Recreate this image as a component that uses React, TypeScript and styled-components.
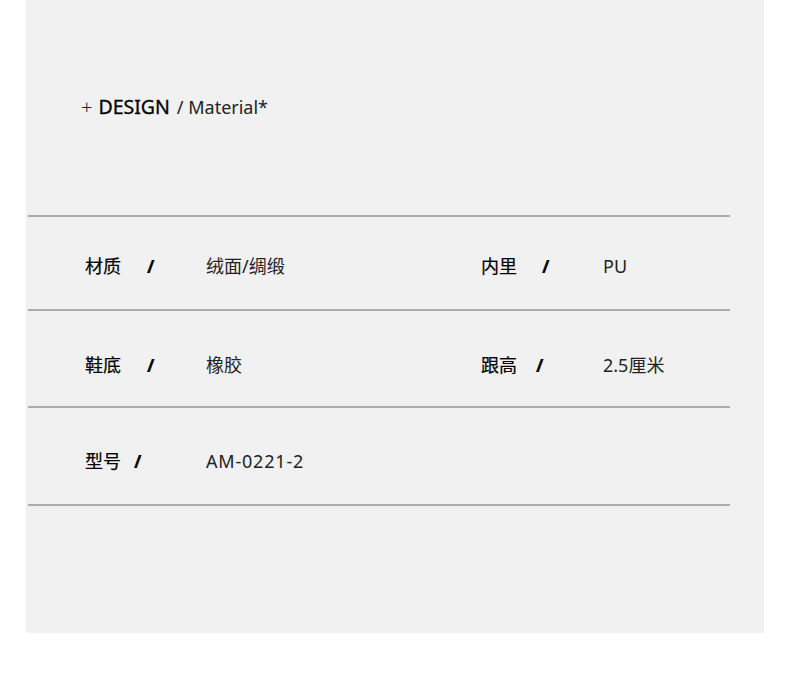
import React from "react";
import styled, { createGlobalStyle } from "styled-components";

const GlobalStyle = createGlobalStyle`
  html, body {
    margin: 0;
    padding: 0;
    background: #ffffff;
  }
  body {
    font-family: "Noto Sans", "Noto Sans CJK SC", sans-serif;
    color: #111;
  }
`;

type Spec = {
  label: string;
  value: string;
  gap: number;
  spaced?: boolean;
};

const rows: { left: Spec; right?: Spec; height: number; top: number }[] = [
  {
    left: { label: "材质", value: "绒面/绸缎", gap: 26 },
    right: { label: "内里", value: "PU", gap: 25 },
    height: 92,
    top: 37,
  },
  {
    left: { label: "鞋底", value: "橡胶", gap: 26 },
    right: { label: "跟高", value: "2.5厘米", gap: 19 },
    height: 95,
    top: 42,
  },
  {
    left: { label: "型号", value: "AM-0221-2", gap: 13, spaced: true },
    height: 96,
    top: 41,
  },
];

export default function App() {
  return (
    <>
      <GlobalStyle />
      <Panel>
        <Heading>
          <Plus>+</Plus>
          <Strong>DESIGN</Strong>
          <Light>/ Material*</Light>
        </Heading>

        <Table>
          {rows.map((row, i) => (
            <Row key={i} $height={row.height} $top={row.top}>
              <Label>
                {row.left.label}
                <Slash $gap={row.left.gap}>/</Slash>
              </Label>
              <Value $spaced={row.left.spaced}>{row.left.value}</Value>
              {row.right && (
                <>
                  <Label>
                    {row.right.label}
                    <Slash $gap={row.right.gap}>/</Slash>
                  </Label>
                  <Value $spaced={row.right.spaced}>{row.right.value}</Value>
                </>
              )}
            </Row>
          ))}
        </Table>
      </Panel>
    </>
  );
}

const Panel = styled.div`
  margin-left: 26px;
  width: 738px;
  height: 633px;
  background: #f1f1f1;
  padding-top: 92px;
  box-sizing: border-box;
`;

const Heading = styled.div`
  display: flex;
  align-items: baseline;
  padding-left: 55px;
  height: 30px;
  line-height: 30px;
  font-family: "Noto Sans", sans-serif;
`;

const Plus = styled.span`
  font-size: 20px;
  font-weight: 300;
  color: #222;
  margin-right: 6px;
`;

const Strong = styled.span`
  font-size: 19.5px;
  font-weight: 400;
  color: #000;
  -webkit-text-stroke: 0.3px #000;
  margin-right: 7px;
`;

const Light = styled.span`
  font-size: 18px;
  color: #222;
`;

const Table = styled.div`
  margin: 93px 0 0 2px;
  width: 702px;
  border-top: 2px solid #acacac;
`;

const Row = styled.div<{ $height: number; $top: number }>`
  display: grid;
  grid-template-columns: 121px 275px 122px 1fr;
  align-items: start;
  padding: ${(p) => p.$top}px 0 0 57px;
  box-sizing: content-box;
  height: ${(p) => p.$height - p.$top}px;
  border-bottom: 2px solid #acacac;
  font-size: 18px;
  line-height: 24px;
`;

const Label = styled.div`
  display: flex;
  font-family: "Noto Sans", "Noto Sans CJK SC", sans-serif;
  font-weight: 400;
  color: #000;
  -webkit-text-stroke: 0.2px #000;
`;

const Slash = styled.span<{ $gap: number }>`
  margin-left: ${(p) => p.$gap}px;
  font-weight: 700;
`;

const Value = styled.div<{ $spaced?: boolean }>`
  font-family: "Noto Sans", "Noto Sans CJK SC", sans-serif;
  color: #222;
  letter-spacing: ${(p) => (p.$spaced ? "0.8px" : "0")};
`;
